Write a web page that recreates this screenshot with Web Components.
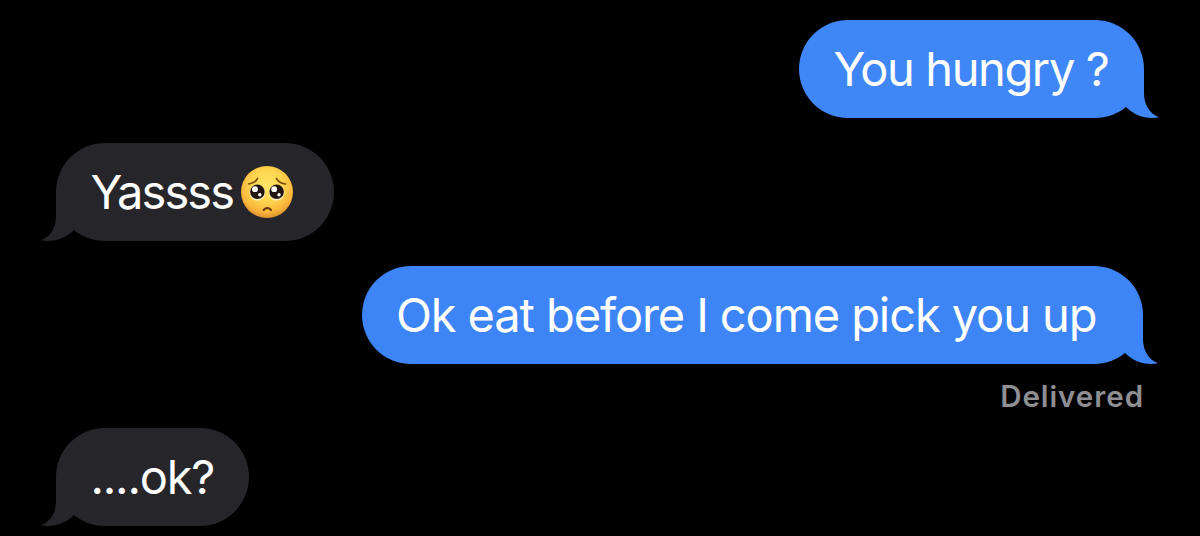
<!DOCTYPE html>
<html lang="en">
<head>
<meta charset="utf-8">
<title>Messages</title>
<style>
  body {
    margin: 0;
    background: #000;
    font-family: Inter, "Liberation Sans", sans-serif;
  }
</style>
</head>
<body>
<chat-thread>
  <chat-message from="me" style="--width: 345px; --tracking: -1.4px">You hungry ?</chat-message>
  <chat-message from="them" style="--width: 277.5px; --tracking: -1.9px">Yassss<pleading-face></pleading-face></chat-message>
  <chat-message from="me" style="--width: 781.5px; --tracking: -1.1px; --fill: #3d84f6; margin-right: 1px">Ok eat before I come pick you up</chat-message>
  <delivery-status>Delivered</delivery-status>
  <chat-message from="them" style="--width: 193px; --tracking: -1.2px">....ok?</chat-message>
</chat-thread>

<script>
class ChatThread extends HTMLElement {
  constructor() {
    super();
    this.attachShadow({ mode: "open" });
    this.shadowRoot.innerHTML = `
      <style>
        :host {
          display: flex;
          flex-direction: column;
          gap: 25.5px;
          box-sizing: border-box;
          width: 1200px;
          height: 536px;
          padding: 20px 56px 0;
          overflow: hidden;
        }
      </style>
      <slot></slot>
    `;
  }
}

class ChatMessage extends HTMLElement {
  constructor() {
    super();
    this.attachShadow({ mode: "open" });
  }

  get from() {
    return this.getAttribute("from");
  }

  connectedCallback() {
    this.#render();
  }

  #render() {
    this.shadowRoot.innerHTML = `
      <style>
        :host {
          display: block;
          position: relative;
          flex: none;
          align-self: flex-start;
          width: var(--width);
          --fill: #26252a;
        }

        :host([from="me"]) {
          align-self: flex-end;
          --fill: #3f86f7;
        }

        .bubble {
          display: flex;
          align-items: center;
          box-sizing: border-box;
          height: 97.5px;
          padding-left: 34.4px;
          border-radius: 49px;
          background: var(--fill);
          color: #fff;
          font-size: 47px;
          line-height: 60px;
          letter-spacing: var(--tracking);
          white-space: nowrap;
        }

        .tail {
          position: absolute;
          bottom: 0;
          left: -15px;
          width: 60px;
          height: 60px;
          fill: var(--fill);
          transform: scaleX(-1);
        }

        :host([from="me"]) .tail {
          left: auto;
          right: -15px;
          transform: none;
        }
      </style>
      <div class="bubble"><span><slot></slot></span></div>
      <svg class="tail" viewBox="0 0 60 60" aria-hidden="true">
        <path d="M45 11V35C45 46 50 55.5 60 59.3C48 61.5 36 58 27 49L34 30Z"/>
      </svg>
    `;
  }
}

class DeliveryStatus extends HTMLElement {
  constructor() {
    super();
    this.attachShadow({ mode: "open" });
    this.shadowRoot.innerHTML = `
      <style>
        :host {
          display: block;
          align-self: flex-end;
          height: 39px;
          margin-top: -25.5px;
          line-height: 64px;
          color: #8e8e93;
          font-size: 29.5px;
          font-weight: 600;
          letter-spacing: 0.95px;
        }
      </style>
      <slot></slot>
    `;
  }
}

class PleadingFace extends HTMLElement {
  constructor() {
    super();
    this.attachShadow({ mode: "open" });
    this.shadowRoot.innerHTML = `
      <style>
        :host {
          display: inline-block;
          width: 54px;
          height: 54px;
          margin-left: 7px;
          vertical-align: -10px;
        }

        svg {
          display: block;
        }
      </style>
      <svg width="54" height="54" viewBox="0 0 54 54" role="img" aria-label="Pleading face">
        <defs>
          <radialGradient id="skin" cx="50%" cy="38%" r="64%">
            <stop offset="0" stop-color="#ffe566"/>
            <stop offset=".5" stop-color="#fed44f"/>
            <stop offset=".8" stop-color="#f9b43a"/>
            <stop offset="1" stop-color="#d98a2c"/>
          </radialGradient>
        </defs>
        <circle cx="27" cy="27" r="26" fill="url(#skin)"/>
        <g fill="none" stroke="#7d4d12" stroke-width="1.7" stroke-linecap="round">
          <path d="M8.5 19Q15 18.3 17.5 13.5"/>
          <path d="M45.5 19Q39 18.3 36.5 13.5"/>
        </g>
        <g fill="#fff4c4">
          <circle cx="17.4" cy="27.8" r="7.8"/>
          <circle cx="36.6" cy="27.8" r="7.8"/>
        </g>
        <g fill="#21150f">
          <circle cx="17.4" cy="26.8" r="7.3"/>
          <circle cx="36.6" cy="26.8" r="7.3"/>
        </g>
        <g fill="#fff">
          <circle cx="15" cy="24.2" r="2.9"/>
          <circle cx="34.2" cy="24.2" r="2.9"/>
          <circle cx="19.8" cy="29.8" r="1.7"/>
          <circle cx="39" cy="29.8" r="1.7"/>
        </g>
        <path d="M23.6 45Q27.3 41 31 45" fill="none" stroke="#6b3510" stroke-width="2" stroke-linecap="round"/>
      </svg>
    `;
  }
}

customElements.define("chat-thread", ChatThread);
customElements.define("chat-message", ChatMessage);
customElements.define("delivery-status", DeliveryStatus);
customElements.define("pleading-face", PleadingFace);
</script>
</body>
</html>
